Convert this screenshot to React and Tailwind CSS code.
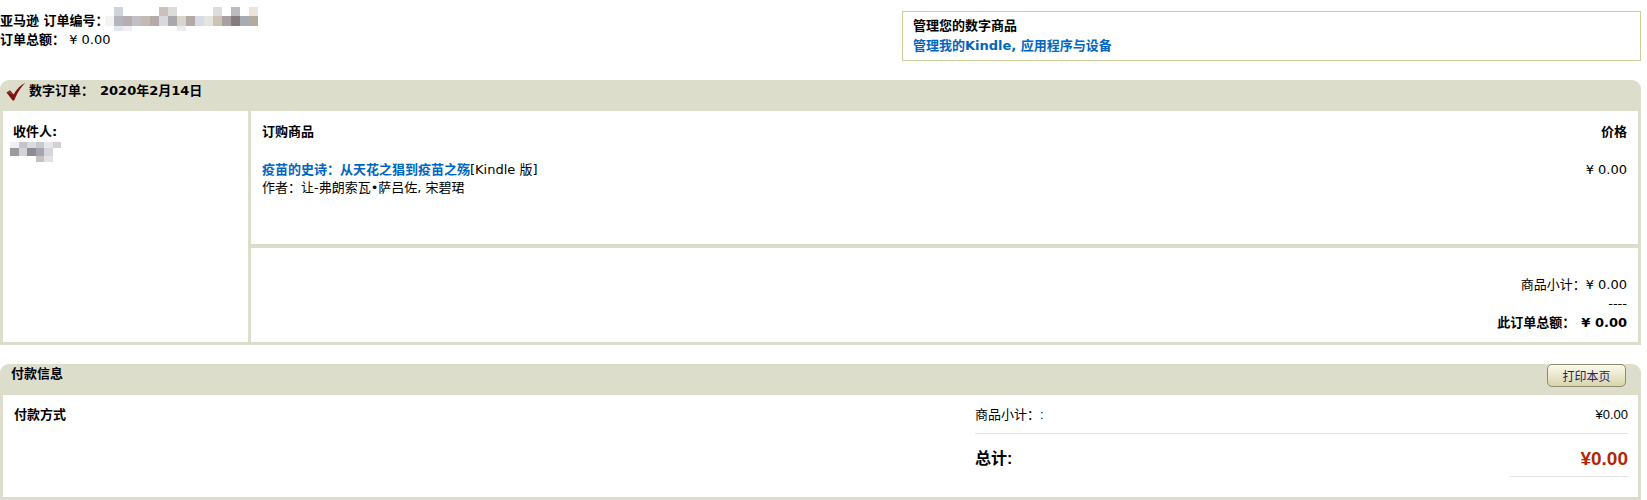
import React from "react";

const orderMosaic = [
  ["#ffffff", "#d0d3da", "#ffffff", "#ffffff", "#ffffff", "#ffffff", "#c9c1bd", "#dcdcdc", "#ffffff", "#ffffff", "#ffffff", "#ffffff", "#dedbdb", "#ffffff", "#bcbcc0", "#ffffff", "#ebe3dd"],
  ["#f4f4f0", "#b4b4c0", "#b5aeb0", "#c0c0c4", "#c4bab4", "#b3aaa9", "#d7d9dc", "#a9a9ab", "#d9d4cc", "#b3aaa5", "#d6dbe6", "#e4e4e0", "#cdc2b4", "#a8a0a2", "#847c80", "#a7abb6", "#b2ab9e"],
  ["#ffffff", "#e5e7ee", "#eef0f3", "#ffffff", "#ffffff", "#ffffff", "#ffffff", "#ffffff", "#ececef", "#ffffff", "#ffffff", "#ffffff", "#ffffff", "#ffffff", "#ffffff", "#ffffff", "#ffffff"],
];
const rowH = [9, 10, 5];

const nameMosaic = [
  ["#f0f0f2", "#c4c4cc", "#dadae0", "#c8c8d0", "#e6e6ea", "#d0d0d6"],
  ["#9a9aa2", "#d4d4d6", "#8c8c94", "#a4a4ac", "#d6d6da", "#ffffff"],
  ["#ffffff", "#ffffff", "#ffffff", "#c6c0c0", "#e2e2e6", "#ffffff"],
];

function Mosaic({ data, w, heights }) {
  return (
    <div className="inline-flex flex-col align-top">
      {data.map((row, i) => (
        <div key={i} className="flex">
          {row.map((c, j) => (
            <div key={j} style={{ background: c, width: w, height: heights[i] }} />
          ))}
        </div>
      ))}
    </div>
  );
}

function Check() {
  return (
    <svg width="21" height="20" viewBox="0 0 21 20" className="shrink-0">
      <path
        d="M1.5 10.5 L5 8.2 L8.6 12.6 C11.5 7.2 15.5 3 20.5 0.8 C16.2 4.8 12.6 10.2 9.2 18.6 L7.6 18.6 Z"
        fill="#7a1418"
      />
      <path d="M2.6 10.4 L4.8 9.1 L7.4 12.4 Z" fill="#b04a4a" opacity="0.6" />
    </svg>
  );
}

export default function App() {
  return (
    <div className="w-[1647px] h-[500px] overflow-hidden bg-white text-black text-[13px] leading-[17px] font-['DejaVu_Sans','Noto_Sans_CJK_SC',sans-serif]">
      {/* top */}
      <div className="flex justify-between items-start pt-[11px] pr-[6px]">
        <div className="leading-[19px]">
          <div className="flex items-start h-[19px]">
            <span className="font-bold">亚马逊 订单编号：</span>
            <div className="-mt-[4px] -ml-[4px]">
              <Mosaic data={orderMosaic} w={9} heights={rowH} />
            </div>
          </div>
          <div>
            <span className="font-bold">订单总额：</span>
            <span> ¥ 0.00</span>
          </div>
        </div>
        <div className="w-[739px] h-[50px] border border-[#cccc99] pl-[10px] pt-[4px] leading-[20px]">
          <div className="font-bold">管理您的数字商品</div>
          <div className="font-bold text-[#0066c0]">管理我的Kindle, 应用程序与设备</div>
        </div>
      </div>

      {/* panel 1 */}
      <div className="mt-[19px] mr-[6px] bg-[#ddddcc] rounded-t-[9px] px-[3px] pb-[3px]">
        <div className="h-[31px] flex items-start pt-[2px] pl-[2px] gap-[3px]">
          <Check />
          <div className="font-bold">
            数字订单：<span className="ml-[6px]">2020年2月14日</span>
          </div>
        </div>
        <div className="flex gap-[3px] h-[231px]">
          <div className="w-[245px] bg-white pl-[10px] pt-[12px]">
            <div className="font-bold">收件人:</div>
            <div className="-ml-[3px] mt-[2px]">
              <Mosaic data={nameMosaic} w={8.5} heights={[6, 8, 6]} />
            </div>
          </div>
          <div className="flex-1 flex flex-col gap-[4px]">
            <div className="h-[133px] bg-white px-[11px] pt-[12px]">
              <div className="flex justify-between font-bold">
                <span>订购商品</span>
                <span>价格</span>
              </div>
              <div className="flex justify-between mt-[21px] leading-[18px]">
                <div>
                  <div>
                    <span className="font-bold text-[#0066c0]">疫苗的史诗：从天花之猖到疫苗之殇</span>
                    <span>[Kindle 版]</span>
                  </div>
                  <div>作者：让-弗朗索瓦•萨吕佐, 宋碧珺</div>
                </div>
                <div>¥ 0.00</div>
              </div>
            </div>
            <div className="flex-1 bg-white pr-[11px] pt-[27px] text-right leading-[19px]">
              <div>商品小计：¥ 0.00</div>
              <div>----</div>
              <div className="font-bold">
                此订单总额：<span className="ml-[6px]">¥ 0.00</span>
              </div>
            </div>
          </div>
        </div>
      </div>

      {/* panel 2 */}
      <div className="mt-[19px] mr-[6px] bg-[#ddddcc] rounded-t-[9px] px-[3px] pb-[3px]">
        <div className="h-[31px] flex justify-between items-start">
          <div className="font-bold pl-[8px] pt-[1px]">付款信息</div>
          <button className="mr-[12px] h-[23px] w-[79px] rounded-[5px] border border-[#8e8b6a] bg-gradient-to-b from-[#fbfaec] to-[#d8d4ac] text-[12px] leading-[20px] text-[#23236b] font-['Noto_Sans_CJK_SC',sans-serif] shadow-[inset_0_1px_0_#ffffff]">
            打印本页
          </button>
        </div>
        <div className="h-[102px] bg-white flex">
          <div className="flex-1 pl-[11px] pt-[11px] font-bold">付款方式</div>
          <div className="w-[653px] mr-[10px] pt-[11px] font-['Liberation_Sans','Noto_Sans_CJK_SC',sans-serif]">
            <div className="flex justify-between pb-[10px] border-b border-[#e3e3e3]">
              <span>商品小计：:</span>
              <span>¥0.00</span>
            </div>
            <div className="flex justify-between items-center pt-[12px] h-[36px]">
              <span className="font-bold text-[16px]">总计:</span>
              <span className="font-bold text-[19px] text-[#b12704]">¥0.00</span>
            </div>
            <div className="ml-auto w-[118px] border-t border-[#e3e3e3] mt-[6px]" />
          </div>
        </div>
      </div>
    </div>
  );
}
